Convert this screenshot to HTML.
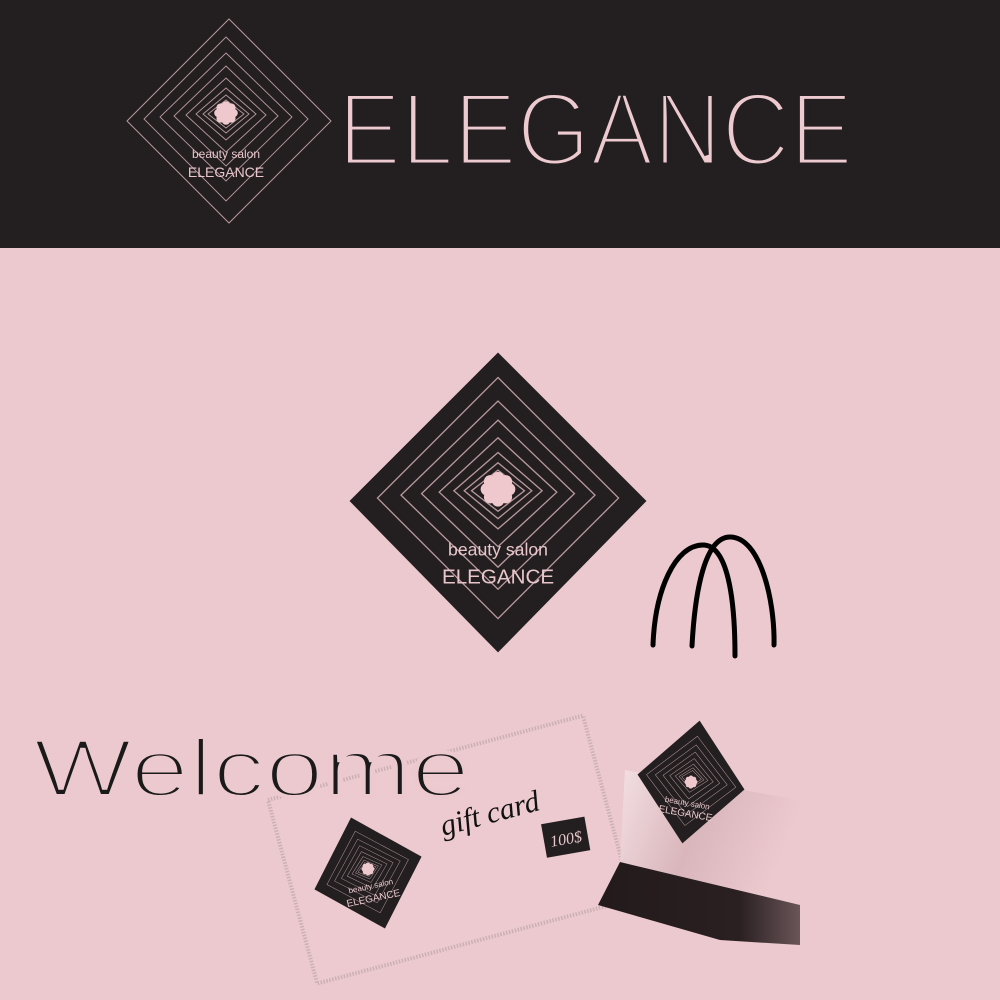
<!DOCTYPE html>
<html><head><meta charset="utf-8"><style>
html,body{margin:0;padding:0;width:1000px;height:1000px;overflow:hidden;background:#ecc9ce}
svg{display:block}
</style></head><body>
<svg width="1000" height="1000" viewBox="0 0 1000 1000" xmlns="http://www.w3.org/2000/svg">
<defs>
<linearGradient id="sh" x1="0" y1="0" x2="1" y2="0.3">
<stop offset="0" stop-color="#f3dfe2"/><stop offset="0.5" stop-color="#d9b6bb"/><stop offset="1" stop-color="#ecc9ce"/></linearGradient>
<linearGradient id="base" x1="0" y1="0" x2="1" y2="0">
<stop offset="0" stop-color="#231a1c"/><stop offset="0.7" stop-color="#2a2022"/><stop offset="1" stop-color="#6a5558"/></linearGradient>
<g id="lines" fill="none" stroke="#b8989c" stroke-width="0.9">
<polygon points="0,-84 82,-2 0,80 -82,-2"/>
<polygon points="0,-68 66,-4 0,60 -66,-4"/>
<polygon points="0,-55 52,-5 0,45 -52,-5"/>
<polygon points="0,-43 40,-6 0,31 -40,-6"/>
<polygon points="0,-33 30,-7 0,19 -30,-7"/>
<polygon points="0,-26 23,-7 0,12 -23,-7"/>
<polygon points="0,-21 18,-7 0,7 -18,-7"/>
</g>
<g id="flower" fill="#eec8cd">
<circle cx="0" cy="-7.5" r="4.3"/><circle cx="0" cy="7.5" r="4.3"/><circle cx="-7.5" cy="0" r="4.3"/><circle cx="7.5" cy="0" r="4.3"/>
<circle cx="-5.3" cy="-5.3" r="4.3"/><circle cx="5.3" cy="-5.3" r="4.3"/><circle cx="-5.3" cy="5.3" r="4.3"/><circle cx="5.3" cy="5.3" r="4.3"/>
<circle cx="0" cy="0" r="5"/>
</g>
<g id="logo">
<use href="#lines"/>
<use href="#flower" transform="translate(0,-8)"/>
<text x="0" y="37" font-family="Liberation Sans, sans-serif" font-size="12" fill="#e8c6cb" text-anchor="middle">beauty salon</text>
<text x="0" y="56" font-family="Liberation Sans, sans-serif" font-size="14" fill="#e8c6cb" text-anchor="middle">ELEGANCE</text>
</g>
</defs>

<rect x="0" y="0" width="1000" height="248" fill="#231f20"/>
<g transform="translate(229,121)">
<polygon points="0,-102 102,0 0,102 -102,0" fill="none" stroke="#b8989c" stroke-width="1"/>
<use href="#logo" transform="translate(-3,0)"/>
</g>
<text x="338" y="165" font-family="Liberation Sans, sans-serif" font-size="104" fill="#eccacf" stroke="#231f20" stroke-width="5" paint-order="normal" textLength="515" lengthAdjust="spacingAndGlyphs">ELEGANCE</text>

<g transform="translate(498,501) scale(1.47)">
<polygon points="0,-101 101,0 0,103 -101,0" fill="#231f20"/>
<use href="#logo"/>
</g>

<g fill="none" stroke="#000" stroke-width="5" stroke-linecap="round">
<path d="M653,645 C655,590 675,545 703,545 C728,545 735,600 735,656"/>
<path d="M692,646 C695,590 705,537 730,537 C760,537 775,600 774,645"/>
</g>

<!-- gift card -->
<g transform="translate(268,800) rotate(-15)">
<rect x="0" y="0" width="326" height="190" fill="#eccacf" stroke="#cbb0b4" stroke-width="4" stroke-dasharray="1.5 1.5"/>
<text x="160" y="80" font-family="Liberation Serif, serif" font-style="italic" font-size="30" fill="#111">gift card</text>
<g transform="translate(278,112) rotate(5)">
<rect x="-22" y="-16" width="44" height="34" fill="#231f20"/>
<text x="0" y="8" font-family="Liberation Serif, serif" font-style="italic" font-size="16" fill="#e8c6cb" text-anchor="middle">100$</text>
</g>
</g>
<g transform="translate(368,873)">
<polygon points="0,-58 56,0 0,58 -56,0" fill="#231f20" transform="rotate(-17)"/>
<g transform="rotate(-17) scale(0.52)"><use href="#lines"/></g>
<use href="#flower" transform="translate(0,-4) scale(0.55)"/>
<g transform="rotate(-12)">
<text x="0" y="16" font-family="Liberation Sans, sans-serif" font-size="8" fill="#e8c6cb" text-anchor="middle">beauty salon</text>
<text x="0" y="29" font-family="Liberation Sans, sans-serif" font-size="10" fill="#e8c6cb" text-anchor="middle">ELEGANCE</text>
</g>
</g>

<!-- stand -->
<polygon points="625,770 800,800 800,905 620,862" fill="url(#sh)"/>
<polygon points="598,905 620,862 800,905 800,945 720,940" fill="url(#base)"/>
<g transform="translate(691,782)">
<polygon points="0,-62 54,0 0,62 -54,0" fill="#231f20" transform="rotate(8)"/>
<g transform="rotate(8) scale(0.55)"><use href="#lines"/></g>
<use href="#flower" transform="scale(0.55)"/>
<g transform="rotate(10)">
<text x="0" y="24" font-family="Liberation Sans, sans-serif" font-size="8" fill="#e8c6cb" text-anchor="middle">beauty salon</text>
<text x="0" y="35" font-family="Liberation Sans, sans-serif" font-size="10" fill="#e8c6cb" text-anchor="middle">ELEGANCE</text>
</g>
</g>

<text x="33" y="796" font-family="Liberation Sans, sans-serif" font-size="82" fill="#1a1a1a" stroke="#ecc9ce" stroke-width="4" paint-order="normal" textLength="437" lengthAdjust="spacingAndGlyphs">Welcome</text>
</svg>
</body></html>
